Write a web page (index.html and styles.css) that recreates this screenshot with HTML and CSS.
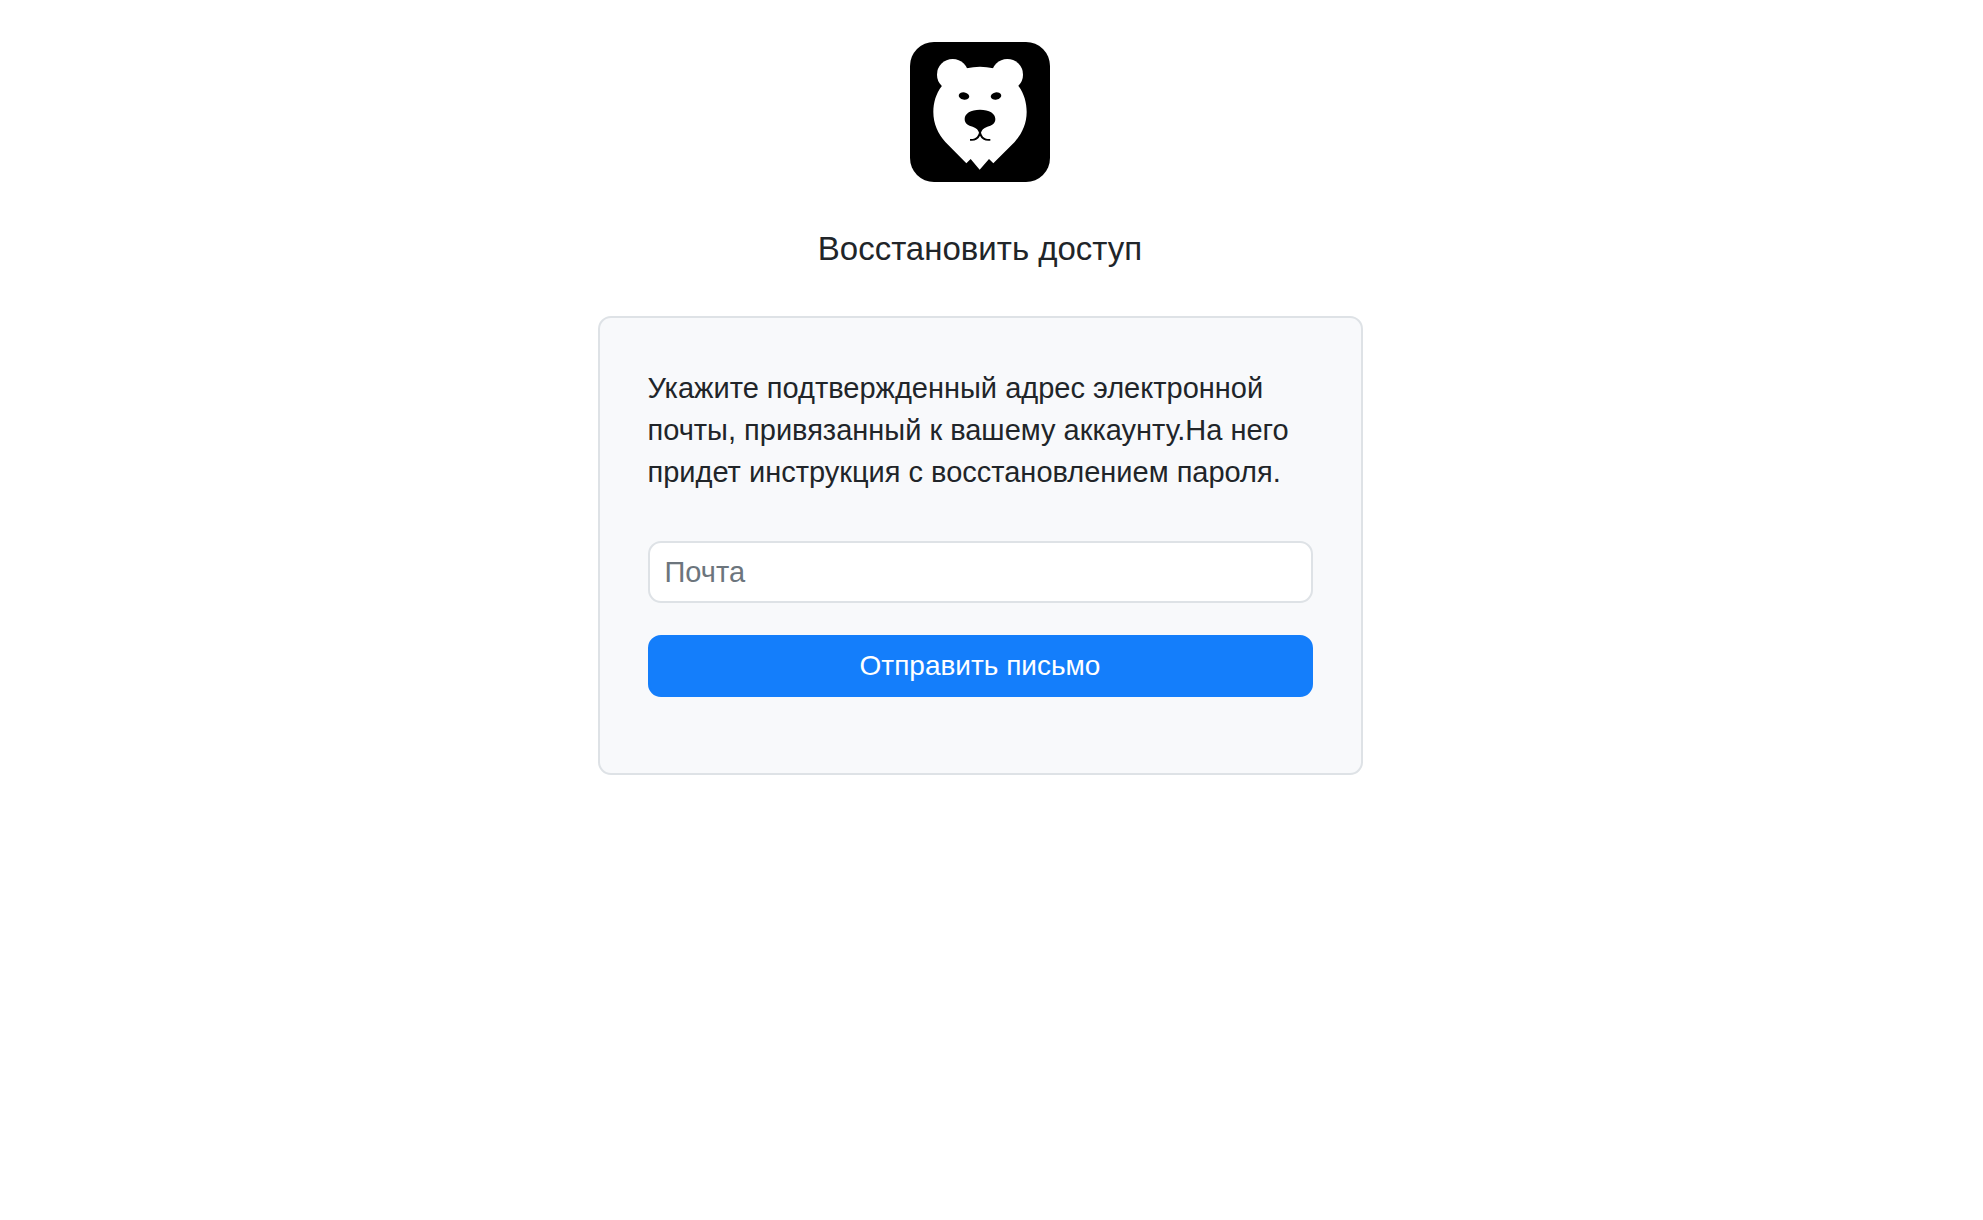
FILE: index.html
```html
<!DOCTYPE html>
<html lang="ru">
<head>
    <meta charset="utf-8">
    <meta name="viewport" content="width=device-width, initial-scale=1">
    <title>Восстановить доступ</title>
    <link rel="stylesheet" href="styles.css">
</head>
<body>
    <main class="recovery">
        <svg class="logo" viewBox="30 30 420 420" aria-hidden="true">
            <rect x="30" y="30" width="420" height="420" rx="72"/>
            <g fill="#fff">
                <circle cx="158" cy="128" r="47"/>
                <circle cx="322" cy="128" r="47"/>
                <path d="M200 109 Q240 100 280 109 L356 163 C372 185 380 212 380 240 C380 275 366 305 344 330 L280 394 L267 381 L239 413 L212 381 L199 394 L136 330 C114 305 100 275 100 240 C100 212 108 185 125 163 Z"/>
            </g>
            <ellipse cx="192" cy="192" rx="16" ry="11" transform="rotate(12 192 192)"/>
            <ellipse cx="288" cy="192" rx="16" ry="11" transform="rotate(-12 288 192)"/>
            <path d="M240 233 C268 233 286 244 286 261 C286 275 275 281 262 284 C250 288 245 294 243 302 C247 316 256 322 271 321 L271 326 C256 328 245 322 240 311 C235 322 224 328 210 326 L210 321 C224 322 233 316 237 302 C235 294 230 288 218 284 C205 281 194 275 194 261 C194 244 212 233 240 233 Z"/>
        </svg>

        <h1>Восстановить доступ</h1>

        <form class="card">
            <p>Укажите подтвержденный адрес электронной почты, привязанный к вашему аккаунту.На него придет инструкция с восстановлением пароля.</p>
            <input class="field" type="email" name="email" placeholder="Почта" aria-label="Почта">
            <button class="submit" type="submit">Отправить письмо</button>
        </form>
    </main>
</body>
</html>
```

FILE: styles.css
```css
* {
    box-sizing: border-box;
}

body {
    margin: 0;
    padding: 42px 23px 42px 0;
    background-color: #fff;
    color: #212529;
    font-family: 'Liberation Sans', Arial, sans-serif;
    font-size: 29px;
    line-height: 42px;
}

.recovery {
    display: flex;
    flex-direction: column;
    align-items: center;
}

.logo {
    width: 140px;
    height: 140px;
}

h1 {
    margin: 48px 0;
    font-size: 33px;
    font-weight: 400;
    line-height: 38px;
}

.card {
    display: flex;
    flex-direction: column;
    width: 100%;
    max-width: 765px;
    padding: 49px 48px 76px;
    border: 2px solid #dee2e6;
    border-radius: 13px;
    background-color: #f8f9fb;
}

.card p {
    margin: 0 0 48px;
}

.field,
.submit {
    width: 100%;
    height: 62px;
    padding: 8px 15px;
    border: 2px solid #dee2e6;
    border-radius: 13px;
    font: inherit;
}

.field {
    margin-bottom: 32px;
    background-color: #fff;
    color: #212529;
}

.field::placeholder {
    color: #6c757d;
    opacity: 1;
}

.submit {
    border-color: #147efb;
    background-color: #147efb;
    color: #fff;
    font-size: 28px;
    cursor: pointer;
}
```
